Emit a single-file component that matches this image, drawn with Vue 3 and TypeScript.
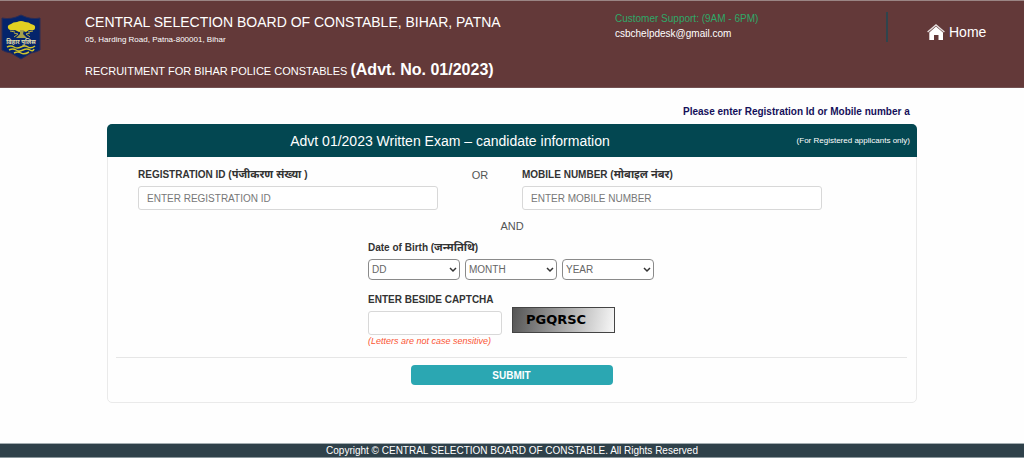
<script setup lang="ts">
import { ref } from 'vue'

const registrationId = ref('')
const mobileNumber = ref('')
const captcha = ref('')
const day = ref('DD')
const month = ref('MONTH')
const year = ref('YEAR')

const days: string[] = Array.from({ length: 31 }, (_, i) => String(i + 1))
const months: string[] = ['JAN', 'FEB', 'MAR', 'APR', 'MAY', 'JUN', 'JUL', 'AUG', 'SEP', 'OCT', 'NOV', 'DEC']
const years: string[] = Array.from({ length: 40 }, (_, i) => String(2006 - i))
</script>

<template>
  <div class="page">
    <header class="top">
      <svg class="logo" viewBox="0 0 40 46" role="img" aria-label="Bihar Police">
        <path d="M1 4 Q10 6 20 1 Q30 6 39 4 V36 Q36 38 30 39 L20 45 L10 39 Q4 38 1 36 Z" fill="#04246b" stroke="#2b2c55" stroke-width="1" />
        <path d="M7 14 Q6 11 10 10 Q12 8 16 8 Q20 6 24 8 Q28 8 30 10 Q35 11 34 14 Q34 17 28 16 L25 18 L22 17 L18 18 L14 16 Q8 17 7 14 Z" fill="#e0d022" />
        <path d="M9 17 L14 18 M32 17 L27 18" stroke="#b8ae45" stroke-width="1" />
        <path d="M19 16 H23 L22 20 L26 24 H15 L19 20 Z" fill="#a5a14d" />
        <path d="M13 23 L17 20 M29 23 L25 20 M13 19 L17 20 M29 19 L25 20" stroke="#b8ae45" stroke-width="1" fill="none" />
        <text class="logo-text" x="20" y="30" text-anchor="middle">बिहार पुलिस</text>
        <path d="M6 33 Q10 31 13 33 T20 33 T27 33 T34 32 M8 36 Q12 34 15 36 T22 36 T29 36 T33 35 M13 39 Q17 37 20 39 T28 38" fill="none" stroke="#cfc32c" stroke-width="1.5" />
      </svg>
      <div class="titles">
        <h1>CENTRAL SELECTION BOARD OF CONSTABLE, BIHAR, PATNA</h1>
        <p class="address">05, Harding Road, Patna-800001, Bihar</p>
        <p class="recruit">RECRUITMENT FOR BIHAR POLICE CONSTABLES <strong>(Advt. No. 01/2023)</strong></p>
      </div>
      <div class="support">
        <p class="hours">Customer Support: (9AM - 6PM)</p>
        <p class="mail">csbchelpdesk@gmail.com</p>
      </div>
      <nav>
        <a href="#" class="home">
          <svg viewBox="0 0 18 16" aria-hidden="true">
            <path d="M9 2.6 L16 8.4 V16 H11.5 V11 H7 V16 H2.3 V8.4 Z" fill="#fff" />
            <path d="M0.6 8 L9 1 L17.4 8" fill="none" stroke="#e4dcdc" stroke-width="1.4" />
          </svg>
          <span>Home</span>
        </a>
      </nav>
    </header>

    <main>
      <p class="notice">Please enter Registration Id or Mobile number a</p>
      <form class="card" @submit.prevent>
        <div class="card-head">
          <h2>Advt 01/2023 Written Exam – candidate information</h2>
          <small>(For Registered applicants only)</small>
        </div>
        <div class="ids">
          <div class="field">
            <label for="reg">REGISTRATION ID (<span lang="hi">पंजीकरण संख्या</span> )</label>
            <input id="reg" v-model="registrationId" type="text" placeholder="ENTER REGISTRATION ID">
          </div>
          <span class="or">OR</span>
          <div class="field">
            <label for="mobile">MOBILE NUMBER (<span lang="hi">मोबाइल नंबर</span>)</label>
            <input id="mobile" v-model="mobileNumber" type="text" placeholder="ENTER MOBILE NUMBER">
          </div>
        </div>
        <div class="middle">
          <p class="and">AND</p>
          <label for="day">Date of Birth (<span lang="hi">जन्मतिथि</span>)</label>
          <div class="dates">
            <div class="pick">
              <select id="day" v-model="day">
                <option>DD</option>
                <option v-for="d in days" :key="d">{{ d }}</option>
              </select>
              <svg viewBox="0 0 8 6" aria-hidden="true"><path d="M1 1 L4 4 L7 1" /></svg>
            </div>
            <div class="pick">
              <select v-model="month" aria-label="Month">
                <option>MONTH</option>
                <option v-for="m in months" :key="m">{{ m }}</option>
              </select>
              <svg viewBox="0 0 8 6" aria-hidden="true"><path d="M1 1 L4 4 L7 1" /></svg>
            </div>
            <div class="pick">
              <select v-model="year" aria-label="Year">
                <option>YEAR</option>
                <option v-for="y in years" :key="y">{{ y }}</option>
              </select>
              <svg viewBox="0 0 8 6" aria-hidden="true"><path d="M1 1 L4 4 L7 1" /></svg>
            </div>
          </div>
          <div class="captcha">
            <div class="captcha-field">
              <label for="captcha">ENTER BESIDE CAPTCHA</label>
              <input id="captcha" v-model="captcha" type="text">
              <em>(Letters are not case sensitive)</em>
            </div>
            <div class="captcha-image">PGQRSC</div>
          </div>
        </div>
        <div class="actions">
          <button type="submit">SUBMIT</button>
        </div>
      </form>
    </main>

    <footer>Copyright © CENTRAL SELECTION BOARD OF CONSTABLE. All Rights Reserved</footer>
  </div>
</template>

<style>
body {
  margin: 0;
  background: #fefefe;
}
</style>

<style scoped>
.page {
  font-family: "Liberation Sans", Arial, "Noto Sans", "Noto Sans Devanagari", sans-serif;
  font-size: 10px;
  color: #333;
}
.page * {
  box-sizing: border-box;
}
h1, h2, p {
  margin: 0;
  font-weight: normal;
}
.top {
  display: grid;
  grid-template-columns: 85px 530fr 271fr 138fr;
  align-items: start;
  height: 88px;
  padding-top: 11px;
  border-top: 1px solid #9a8584;
  border-bottom: 1px solid #735152;
  background: #633939;
  color: #fff;
}
.logo {
  width: 40px;
  height: 46px;
  margin: 2px 0 0 1px;
}
.logo-text {
  font-size: 6px;
  font-weight: bold;
  fill: #e4dfae;
}
h1 {
  font-size: 14px;
  line-height: 20px;
}
.address {
  font-size: 8px;
  line-height: 16px;
}
.recruit {
  margin-top: 10px;
  font-size: 11px;
  line-height: 24px;
}
.recruit strong {
  font-size: 16px;
}
.hours {
  color: #2fa868;
  line-height: 14px;
}
.mail {
  line-height: 16px;
}
nav {
  border-left: 2px solid #2f444d;
  height: 30px;
}
.home {
  display: flex;
  align-items: center;
  gap: 4px;
  height: 40px;
  padding-left: 39px;
  color: #fff;
  font-size: 14px;
  text-decoration: none;
}
.home svg {
  width: 18px;
  height: 16px;
}
main {
  padding: 16px 107px 40px;
}
.notice {
  width: 231px;
  margin: 0 3px 4px auto;
  overflow: hidden;
  white-space: nowrap;
  font-weight: bold;
  line-height: 16px;
  color: #15105a;
}
.card {
  border: 1px solid #eaeaea;
  border-radius: 5px;
}
.card-head {
  display: grid;
  grid-template-columns: 1fr auto 1fr;
  align-items: center;
  height: 33px;
  margin: -1px -1px 0;
  padding: 0 7px;
  border-radius: 5px 5px 0 0;
  background: #034751;
  color: #fff;
}
h2 {
  grid-column: 2;
  margin-right: 124px;
  font-size: 14px;
}
.card-head small {
  justify-self: end;
  font-size: 8px;
}
label {
  display: block;
  font-weight: bold;
  line-height: 16px;
  white-space: nowrap;
}
label span {
  font-size: 11px;
  line-height: 1;
}
input {
  display: block;
  width: 100%;
  height: 24px;
  padding: 0 8px;
  border: 1px solid #d8d8d8;
  border-radius: 3px;
  background: #fff;
  color: #555;
  font-family: inherit;
  font-size: 10px;
}
input::placeholder {
  color: #777;
}
.ids {
  display: grid;
  grid-template-columns: 300fr 84fr 300fr;
  margin: 10px 94px 0 30px;
}
.field label {
  margin-bottom: 3px;
}
.or,
.and {
  font-size: 11px;
  line-height: 16px;
  text-align: center;
  color: #555;
}
.middle {
  width: 288px;
  margin: 8px auto 0;
}
.middle label {
  margin-top: 6px;
}
.dates {
  display: grid;
  grid-template-columns: repeat(3, 92px);
  gap: 5px;
  margin-top: 3px;
}
.pick {
  position: relative;
}
select {
  display: block;
  width: 100%;
  height: 21px;
  padding: 0 3px;
  border: 1px solid #8a8a8a;
  border-radius: 4px;
  appearance: none;
  background: #fff;
  color: #666;
  font-family: inherit;
  font-size: 10px;
}
.pick svg {
  position: absolute;
  top: 8px;
  right: 3px;
  width: 8px;
  height: 6px;
  pointer-events: none;
}
.pick path {
  fill: none;
  stroke: #333;
  stroke-width: 1.5;
}
.captcha {
  display: flex;
  gap: 10px;
  margin-top: 6px;
}
.captcha-field {
  width: 134px;
}
.captcha-field input {
  margin-top: 3px;
}
.captcha-field em {
  display: block;
  font-size: 9px;
  line-height: 12px;
  color: #fb5534;
  white-space: nowrap;
}
.captcha-image {
  width: 103px;
  height: 26px;
  margin-top: 21px;
  padding-left: 13px;
  border: 1px solid #444;
  background: linear-gradient(100deg, #555, #f8f8f8);
  color: #000;
  font-family: "DejaVu Sans", sans-serif;
  font-size: 13px;
  font-weight: bold;
  line-height: 24px;
}
.actions {
  margin: 10px 9px 0 8px;
  padding: 7px 0 17px;
  border-top: 1px solid #e6e6e6;
}
button {
  display: block;
  width: 202px;
  height: 20px;
  margin: 0 auto;
  padding: 0;
  border: 0;
  border-radius: 4px;
  background: #2ba7b2;
  color: #fff;
  font-family: inherit;
  font-size: 10px;
  font-weight: bold;
}
footer {
  border-top: 1px solid #a3adb1;
  border-bottom: 1px solid #8a969b;
  background: #2f414a;
  color: #fff;
  line-height: 13px;
  text-align: center;
}
</style>
